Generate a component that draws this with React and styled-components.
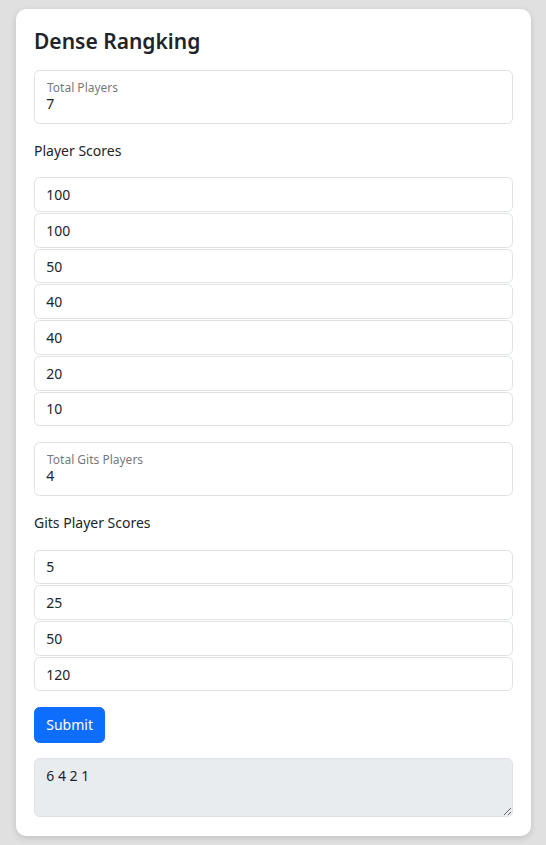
import React, { useState } from "react";
import styled, { createGlobalStyle } from "styled-components";

const Global = createGlobalStyle`
  html, body { margin: 0; padding: 0; }
  body {
    background: #e0e0e0;
    font-family: "Noto Sans", "Open Sans", sans-serif;
    font-size: 14px;
    line-height: 22.5px;
    color: #212529;
  }
  * { box-sizing: border-box; }
`;

const Page = styled.div`
  padding: 9px 15.5px 11px 16px;
`;

const Card = styled.div`
  background: #fff;
  border-radius: 10px;
  box-shadow: 0 2px 6px rgba(0, 0, 0, 0.14);
  padding: 18.5px 17.5px 18.5px 18px;
  display: flex;
  flex-direction: column;
`;

const Title = styled.h4`
  margin: 0 0 15px;
  font-size: 21px;
  font-weight: 600;
  line-height: 27px;
`;

const Floating = styled.div`
  position: relative;
  height: 54.4px;
  border: 1px solid #dee2e6;
  border-radius: 5.6px;
  margin-bottom: 15.5px;
  padding: 22px 11.25px 8px;
`;

const FloatLabel = styled.label`
  position: absolute;
  top: 7.5px;
  left: 12px;
  font-size: 12px;
  line-height: 19px;
  color: rgba(33, 37, 41, 0.65);
`;

const FloatInput = styled.input`
  border: none;
  outline: none;
  width: 100%;
  padding: 0;
  font: inherit;
  color: #212529;
  background: transparent;
`;

const SectionLabel = styled.div`
  margin: 0.5px 0 15px;
  line-height: 22.5px;
`;

const ScoreList = styled.div`
  display: flex;
  flex-direction: column;
  gap: 1px;
  margin-bottom: 15.5px;
`;

const ScoreInput = styled.input`
  display: block;
  width: 100%;
  height: 34.7px;
  padding: 5.6px 11.25px;
  border: 1px solid #dee2e6;
  border-radius: 5.6px;
  font: inherit;
  color: #212529;
  background: #fff;
  outline: none;
`;

const Button = styled.button`
  align-self: flex-start;
  height: 35.6px;
  padding: 5.6px 11.25px;
  background: #0d6efd;
  border: 1px solid #0d6efd;
  border-radius: 5.6px;
  color: #fff;
  font: inherit;
  line-height: 22.5px;
  margin: 0.5px 0 15.5px;
  cursor: pointer;
`;

const Result = styled.textarea`
  display: block;
  width: 100%;
  height: 59px;
  padding: 5.6px 11.25px;
  border: 1px solid #dee2e6;
  border-radius: 5.6px;
  background: #e9ecef;
  font: inherit;
  color: #212529;
  resize: vertical;
  outline: none;
`;

export default function App() {
  const [players, setPlayers] = useState("7");
  const [scores, setScores] = useState(["100", "100", "50", "40", "40", "20", "10"]);
  const [gits, setGits] = useState("4");
  const [gitsScores, setGitsScores] = useState(["5", "25", "50", "120"]);

  const upd = (arr, set, i) => (e) => {
    const n = arr.slice();
    n[i] = e.target.value;
    set(n);
  };

  return (
    <>
      <Global />
      <Page>
        <Card>
          <Title>Dense Rangking</Title>
          <Floating>
            <FloatLabel>Total Players</FloatLabel>
            <FloatInput value={players} onChange={(e) => setPlayers(e.target.value)} />
          </Floating>
          <SectionLabel>Player Scores</SectionLabel>
          <ScoreList>
            {scores.map((s, i) => (
              <ScoreInput key={i} value={s} onChange={upd(scores, setScores, i)} />
            ))}
          </ScoreList>
          <Floating>
            <FloatLabel>Total Gits Players</FloatLabel>
            <FloatInput value={gits} onChange={(e) => setGits(e.target.value)} />
          </Floating>
          <SectionLabel>Gits Player Scores</SectionLabel>
          <ScoreList>
            {gitsScores.map((s, i) => (
              <ScoreInput key={i} value={s} onChange={upd(gitsScores, setGitsScores, i)} />
            ))}
          </ScoreList>
          <Button>Submit</Button>
          <Result readOnly value="6 4 2 1" />
        </Card>
      </Page>
    </>
  );
}
